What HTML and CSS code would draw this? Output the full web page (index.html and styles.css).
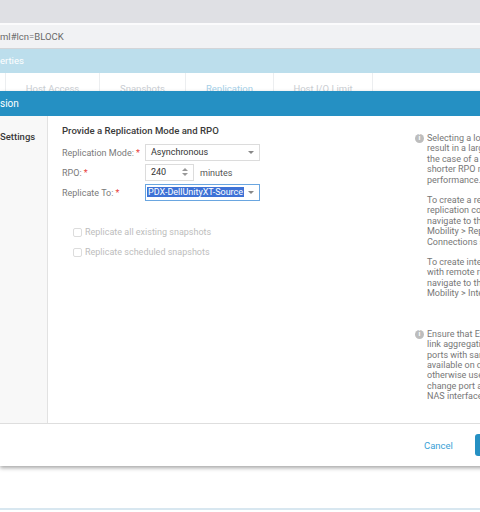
FILE: index.html
```html
<!DOCTYPE html>
<html lang="en">
<head>
    <meta charset="UTF-8">
    <title>Replication Session</title>
    <link rel="stylesheet" href="styles.css">
</head>
<body>
    <div class="page">
        <div class="topbar"></div>
        <div class="address">ml#lcn=BLOCK</div>
        <div class="page-header">erties</div>
        <div class="tabs">
            <div class="tab tab-first"></div>
            <div class="tab" style="width: 93px">Host Access</div>
            <div class="tab" style="width: 85px">Snapshots</div>
            <div class="tab tab-active" style="width: 87px">Replication</div>
            <div class="tab" style="width: 98px">Host I/O Limit</div>
        </div>
        <div class="page-rest"></div>
    </div>

    <div class="dialog">
        <div class="dialog-header">sion</div>
        <div class="dialog-body">
            <div class="steps">
                <div class="step">Settings</div>
            </div>
            <div class="main">
                <div class="form">
                    <div class="form-title">Provide a Replication Mode and RPO</div>
                    <div class="row">
                        <label>Replication Mode: <span class="req">*</span></label>
                        <div class="select">Asynchronous<span class="caret"></span></div>
                    </div>
                    <div class="row">
                        <label>RPO: <span class="req">*</span></label>
                        <div class="spin">240<span class="spin-arrows"><span class="up"></span><span class="down"></span></span></div>
                        <span class="unit">minutes</span>
                    </div>
                    <div class="row">
                        <label>Replicate To: <span class="req">*</span></label>
                        <div class="select focused"><span class="selected">PDX-DellUnityXT-Source</span><span class="caret"></span></div>
                    </div>
                    <div class="checks">
                        <div class="check"><span class="box"></span>Replicate all existing snapshots</div>
                        <div class="check"><span class="box"></span>Replicate scheduled snapshots</div>
                    </div>
                </div>
                <div class="help">
                    <div class="help-item">
                        <span class="info">i</span>
                        <div class="help-text">
                            <p>Selecting a longer RPO may<br>result in a larger data loss in<br>the case of a disaster. A<br>shorter RPO may impact<br>performance.</p>
                            <p>To create a remote system<br>replication connection,<br>navigate to the Protection &amp;<br>Mobility &gt; Replication &gt;<br>Connections screen.</p>
                            <p>To create interfaces for use<br>with remote replication,<br>navigate to the Protection &amp;<br>Mobility &gt; Interfaces screen.</p>
                        </div>
                    </div>
                    <div class="help-item">
                        <span class="info">i</span>
                        <div class="help-text">
                            <p>Ensure that Ethernet ports,<br>link aggregations, or FSN<br>ports with same names are<br>available on dual SPs,<br>otherwise users must<br>change port assignment of<br>NAS interfaces.</p>
                        </div>
                    </div>
                </div>
            </div>
        </div>
        <div class="dialog-footer">
            <span class="link-btn">Cancel</span>
            <span class="primary-btn">Next</span>
        </div>
    </div>
</body>
</html>
```

FILE: styles.css
```css
body {
    font-family: Roboto, "Liberation Sans", sans-serif;
    margin: 0;
    width: 480px;
    height: 512px;
    overflow: hidden;
    position: relative;
    background: #fff;
}
.topbar {
    height: 23px;
    background: #dfe0e4;
    border-bottom: 2px solid #fbfbfc;
}
.address {
    height: 23px;
    line-height: 23px;
    background: #f1f2f4;
    border-bottom: 1px solid #d3d5d8;
    color: #6a6a6a;
    font-size: 9.5px;
    white-space: nowrap;
}
.page-header {
    height: 24px;
    line-height: 24px;
    background: #bcdeec;
    color: #fff;
    font-size: 9.5px;
}
.tabs {
    display: flex;
    height: 34px;
    background: #fff;
    border-bottom: 1px solid #e4e4e4;
}
.tab {
    border-right: 1px solid #eceef0;
    text-align: center;
    line-height: 32px;
    color: #c9cdd2;
    font-size: 9.5px;
}
.tab-first {
    width: 5px;
}
.tab-active {
    color: #a6cfe7;
}
.page-rest {
    height: 400px;
    border-bottom: 2px solid #d8e7f0;
}

/* dialog over the page */
.dialog {
    position: absolute;
    top: 91px;
    left: 0;
    width: 560px;
    background: #fff;
    box-shadow: 0 2px 4px rgba(0, 0, 0, 0.35);
}
.dialog-header {
    height: 25px;
    line-height: 25px;
    background: #2590c3;
    color: #fff;
    font-size: 10px;
}
.dialog-body {
    display: flex;
    height: 307px;
    border-bottom: 1px solid #dedede;
}
.steps {
    width: 47px;
    background: #f8f8f8;
    border-right: 1px solid #e2e2e2;
}
.step {
    padding-top: 15px;
    font-size: 9.5px;
    font-weight: 500;
    color: #3a3a3a;
}
.main {
    flex: 1;
    display: flex;
    padding: 9px 0 0 14px;
}
.form {
    width: 353px;
}
.form-title {
    font-size: 9.6px;
    font-weight: 500;
    color: #3a3a3a;
    margin-bottom: 8px;
}
.row {
    display: flex;
    align-items: center;
    height: 17px;
    margin-bottom: 3px;
}
.row label {
    width: 83px;
    font-size: 9px;
    color: #7a7a7a;
}
.req {
    color: #e8413c;
}
.select {
    position: relative;
    width: 108px;
    height: 15px;
    line-height: 15px;
    padding-left: 5px;
    border: 1px solid #dcdcdc;
    font-size: 9px;
    color: #333;
}
.caret {
    position: absolute;
    right: 5px;
    top: 6px;
    border-left: 3px solid transparent;
    border-right: 3px solid transparent;
    border-top: 3px solid #888;
}
.select.focused {
    border-color: #6aa6e0;
    padding-left: 1px;
    width: 112px;
}
.selected {
    background: #3e72d6;
    color: #fff;
    padding: 0 1px;
}
.spin {
    position: relative;
    width: 42px;
    height: 15px;
    line-height: 15px;
    padding-left: 5px;
    border: 1px solid #dcdcdc;
    font-size: 9px;
    color: #333;
}
.spin-arrows {
    position: absolute;
    right: 5px;
    top: 3px;
    display: flex;
    flex-direction: column;
    gap: 2px;
}
.spin-arrows .up {
    border-left: 3px solid transparent;
    border-right: 3px solid transparent;
    border-bottom: 3px solid #999;
}
.spin-arrows .down {
    border-left: 3px solid transparent;
    border-right: 3px solid transparent;
    border-top: 3px solid #999;
}
.unit {
    margin-left: 6px;
    font-size: 9px;
    color: #555;
}
.checks {
    margin-top: 21px;
    padding-left: 11px;
}
.check {
    display: flex;
    align-items: center;
    height: 20px;
    font-size: 9px;
    color: #bdbdbd;
}
.box {
    width: 7px;
    height: 7px;
    border: 1px solid #dcdcdc;
    border-radius: 2px;
    margin-right: 3px;
}
.help {
    padding-top: 8px;
}
.help-item {
    display: flex;
    margin-bottom: 20px;
}
.info {
    width: 9px;
    height: 9px;
    border-radius: 50%;
    background: #bdbdbd;
    color: #fff;
    font-size: 7px;
    font-weight: bold;
    line-height: 9px;
    text-align: center;
    margin: 1px 3px 0 0;
    flex: none;
}
.help-text p {
    margin: 0 0 10px;
    font-size: 9px;
    line-height: 10.4px;
    color: #777;
    white-space: nowrap;
}
.dialog-footer {
    display: flex;
    align-items: center;
    height: 42px;
    padding-left: 424px;
}
.link-btn {
    font-size: 9.5px;
    color: #3a9fd6;
}
.primary-btn {
    margin-left: 22px;
    height: 22px;
    line-height: 22px;
    padding: 0 16px;
    border-radius: 3px;
    background: #2590c3;
    color: #fff;
    font-size: 9.5px;
}
```
